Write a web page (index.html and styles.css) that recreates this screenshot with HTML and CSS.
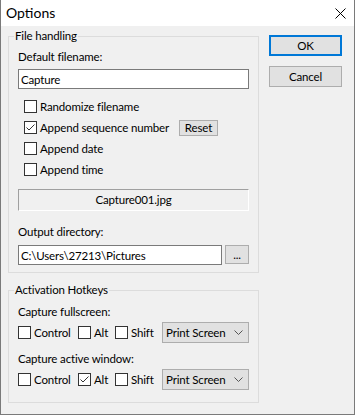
FILE: index.html
```html
<!DOCTYPE html>
<html lang="en">
<head>
  <meta charset="UTF-8">
  <meta name="viewport" content="width=device-width, initial-scale=1.0">
  <title>Options</title>
  <link rel="stylesheet" href="styles.css">
</head>
<body>
  <div class="window">
    <div class="titlebar">
      <span class="title">Options</span>
      <svg class="close" width="11" height="11" viewBox="0 0 11 11">
        <path d="M0.5 0.5 L10.5 10.5 M10.5 0.5 L0.5 10.5" stroke="#000" stroke-width="1" fill="none"/>
      </svg>
    </div>

    <div class="client">
      <div class="main">
        <fieldset class="group files">
          <legend>File handling</legend>

          <div class="label">Default filename:</div>
          <input class="field" type="text" value="Capture">

          <div class="options">
            <label class="check"><span class="box"></span>Randomize filename</label>
            <div class="option-row">
              <label class="check seq"><span class="box"><svg width="11" height="11" viewBox="0 0 11 11"><path d="M1.5 5.5 L4 8 L9.5 2.5" stroke="#333" stroke-width="1" fill="none"/></svg></span>Append sequence number</label>
              <button class="btn reset">Reset</button>
            </div>
            <label class="check"><span class="box"></span>Append date</label>
            <label class="check"><span class="box"></span>Append time</label>
          </div>

          <div class="preview">Capture001.jpg</div>

          <div class="label out">Output directory:</div>
          <div class="path-row">
            <input class="field" type="text" value="C:\Users\27213\Pictures">
            <button class="btn browse">...</button>
          </div>
        </fieldset>

        <fieldset class="group hotkeys">
          <legend>Activation Hotkeys</legend>

          <div class="label">Capture fullscreen:</div>
          <div class="hotkey-row">
            <label class="check key-ctrl"><span class="box"></span>Control</label>
            <label class="check key-alt"><span class="box"></span>Alt</label>
            <label class="check key-shift"><span class="box"></span>Shift</label>
            <div class="combo"><span>Print Screen</span>
              <svg class="chevron" width="9" height="5" viewBox="0 0 9 5"><path d="M0.5 0.5 L4.5 4.5 L8.5 0.5" stroke="#555" stroke-width="1" fill="none"/></svg>
            </div>
          </div>

          <div class="label second">Capture active window:</div>
          <div class="hotkey-row">
            <label class="check key-ctrl"><span class="box"></span>Control</label>
            <label class="check key-alt"><span class="box"><svg width="11" height="11" viewBox="0 0 11 11"><path d="M1.5 5.5 L4 8 L9.5 2.5" stroke="#333" stroke-width="1" fill="none"/></svg></span>Alt</label>
            <label class="check key-shift"><span class="box"></span>Shift</label>
            <div class="combo"><span>Print Screen</span>
              <svg class="chevron" width="9" height="5" viewBox="0 0 9 5"><path d="M0.5 0.5 L4.5 4.5 L8.5 0.5" stroke="#555" stroke-width="1" fill="none"/></svg>
            </div>
          </div>
        </fieldset>
      </div>

      <div class="side">
        <button class="btn default">OK</button>
        <button class="btn">Cancel</button>
      </div>
    </div>
  </div>
</body>
</html>
```

FILE: styles.css
```css
html, body {
  margin: 0;
  padding: 0;
  background: #f0f0f0;
  font-family: 'Lato', 'Noto Sans', sans-serif;
  font-size: 11.5px;
  letter-spacing: -0.15px;
  line-height: 16px;
  color: #000;
}

.window {
  width: 355px;
  height: 415px;
  box-sizing: border-box;
  border: 1px solid #7a7a7a;
  border-top: none;
  background: #f0f0f0;
}

.titlebar {
  height: 26px;
  background: #fff;
  display: flex;
  align-items: center;
  justify-content: space-between;
  padding: 0 8px 0 5px;
}

.title {
  font-size: 14px;
  letter-spacing: 0;
  line-height: 20px;
}

.close {
  display: block;
}

.client {
  display: flex;
  padding: 2px 0 0 7px;
  gap: 10px;
}

.main {
  width: 251px;
}

.group {
  margin: 0;
  padding: 5px 9px 7px 9px;
  border: 1px solid #dcdcdc;
  min-width: 0;
}

.group legend {
  padding: 0 1px;
  margin-left: -4px;
  line-height: 16px;
}

.hotkeys {
  margin-top: 9px;
  padding-top: 6px;
  padding-bottom: 12px;
}

.label {
  height: 16px;
}

.field {
  display: block;
  width: 100%;
  height: 20px;
  box-sizing: border-box;
  margin: 4px 0 0 0;
  padding: 0 2px;
  border: 1px solid #7a7a7a;
  background: #fff;
  font-family: inherit;
  font-size: inherit;
  letter-spacing: inherit;
  color: #000;
  outline: none;
}

.options {
  margin: 7px 0 0 6px;
}

.check {
  display: flex;
  align-items: center;
  height: 21px;
  white-space: nowrap;
}

.box {
  width: 13px;
  height: 13px;
  box-sizing: border-box;
  border: 1px solid #333;
  background: #fff;
  margin-right: 3px;
  flex: none;
}

.box svg {
  display: block;
}

.option-row {
  display: flex;
  align-items: center;
  height: 21px;
}

.seq {
  width: 155px;
}

.btn {
  font-family: inherit;
  font-size: inherit;
  letter-spacing: inherit;
  color: #000;
  background: #e1e1e1;
  border: 1px solid #adadad;
  padding: 0;
  margin: 0;
  box-sizing: border-box;
}

.reset {
  width: 39px;
  height: 16px;
  line-height: 14px;
}

.preview {
  margin-top: 9px;
  height: 22px;
  line-height: 20px;
  text-align: center;
  box-sizing: border-box;
  border: 1px solid #fff;
  border-top-color: #a0a0a0;
  border-left-color: #a0a0a0;
}

.out {
  margin-top: 13px;
}

.path-row {
  display: flex;
  gap: 3px;
  margin-top: 5px;
  align-items: flex-start;
}

.path-row .field {
  margin: 0;
  flex: 1;
}

.browse {
  width: 24px;
  height: 19px;
  line-height: 12px;
  flex: none;
}

.hotkey-row {
  display: flex;
  align-items: center;
  height: 21px;
  margin-top: 2px;
}

.key-ctrl {
  width: 60px;
}

.key-alt {
  width: 37px;
}

.key-shift {
  width: 47px;
}

.combo {
  flex: 1;
  height: 21px;
  box-sizing: border-box;
  border: 1px solid #adadad;
  background: #e1e1e1;
  display: flex;
  align-items: center;
  justify-content: space-between;
  padding: 0 5px 0 3px;
  white-space: nowrap;
}

.chevron {
  display: block;
}

.second {
  margin-top: 8px;
}

.side {
  display: flex;
  flex-direction: column;
  gap: 10px;
  padding-top: 7px;
}

.side .btn {
  width: 73px;
  height: 21px;
}

.side .default {
  border: 2px solid #0078d7;
}
```
